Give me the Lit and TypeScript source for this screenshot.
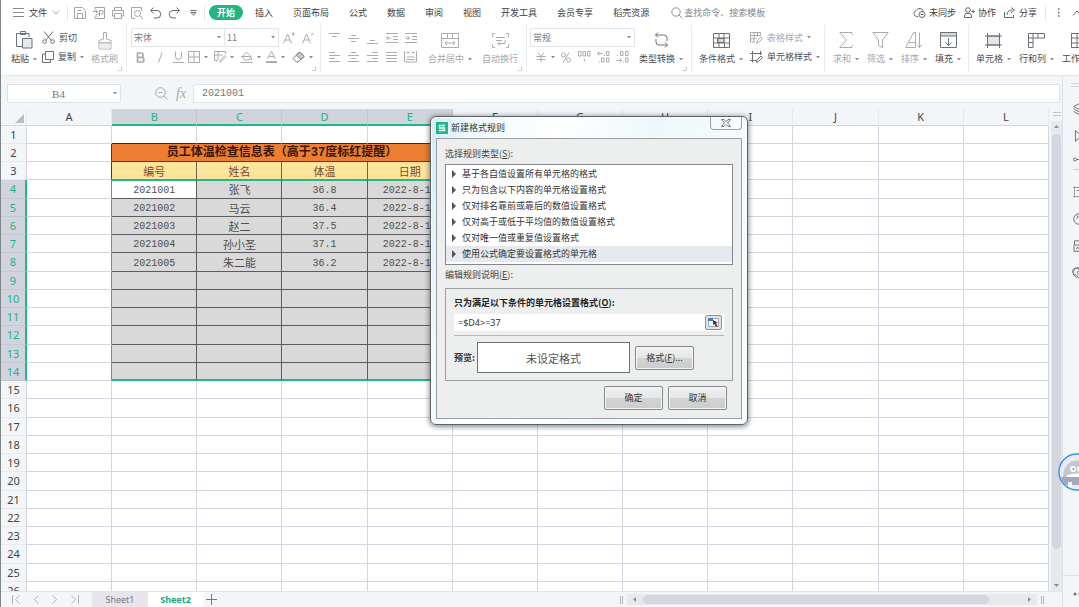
import { LitElement, html, svg, css, nothing, SVGTemplateResult } from "lit";
import { customElement, property, state } from "lit/decorators.js";
import { classMap } from "lit/directives/class-map.js";

/* Each glyph is drawn in its own box: [width, height, strokes]. */
const GLYPHS: Record<string, [number, number, SVGTemplateResult]> = {
  menu: [11, 9, svg`<path d="M0 .5h11M0 4.5h11M0 8.5h11"/>`],
  chevDown: [8, 5, svg`<path d="M1 .5l3 3.5 3-3.5"/>`],
  chevUp: [10, 6, svg`<path d="M1 5.5l4-4.500 4 4.500"/>`],
  save: [12, 12, svg`<path d="M.5 11.500V.5h8l3 3v8zM3.500 11V6.500h5V11M3.500 3.500h4"/>`],
  pdf: [12, 12, svg`<path d="M2 3.500V.5h9.500v11H2V9M0 4.500h4.500M3 3l1.500 1.500L3 6M6.500 9V3.500h2a1.500 1.500 0 010 3.500h-4c-2 0-2 2.500 0 2.500"/>`],
  print: [12, 12, svg`<path d="M2.500 3.500v-3h7v3M2.500 9H.5V3.500h11V9h-2M2.500 6.500h7v5h-7z"/>`],
  preview: [12, 12, svg`<path d="M4 11.500H.5V.5h10V4"/><circle cx="6.500" cy="6.500" r="3"/><path d="M9 9l3 3"/>`],
  undo: [11, 12, svg`<path d="M3.500.5L.7 3.500l2.800 3M1 3.500h6a3.500 3.500 0 010 7.500H4"/>`],
  redo: [11, 12, svg`<path d="M7.500.5l2.800 3-2.800 3M10 3.500H4A3.500 3.500 0 004 11h3"/>`],
  more: [7, 6, svg`<path d="M.5.5h6M1 2.500h5L3.500 5.300z"/>`],
  search: [12, 12, svg`<circle cx="5" cy="5" r="4.200"/><path d="M8 8l3.500 3.500"/>`],
  cloud: [13, 11, svg`<path d="M5 9.500H3.500a3 3 0 01-.5-5.800 4 4 0 017.500.8"/><circle cx="9" cy="7.500" r="3"/><path d="M7.500 7.500h3"/>`],
  person: [11, 11, svg`<circle cx="4" cy="3" r="2.300"/><path d="M.5 10.500V9a2.500 2.500 0 012.500-2.500h2A2.500 2.500 0 017.500 9v1.500zM7.500 4.500h3.500M9.200 2.700v3.600"/>`],
  share: [12, 11, svg`<path d="M.5 5v5.500h9V8M3 8c0-3.500 2-5 5.500-5M7 .5L10.500 3 7 6"/>`],
  dots: [2, 9, svg`<path d="M0 1h1.500M0 4.500h1.500M0 8h1.500" stroke-width="1.500"/>`],
  paste: [17, 18, svg`<path d="M6 15.500H.5v-13H13V6M4.500.5h5v3h-5z"/><path d="M6.500 7.500h9.500v9.500H6.500z" fill="#e8eaed"/>`],
  cut: [13, 13, svg`<path d="M2 .5l7.500 9M11 .5l-7.500 9"/><circle cx="2.500" cy="10.500" r="1.800"/><circle cx="10.500" cy="10.500" r="1.800"/>`],
  copy: [12, 12, svg`<path d="M3.500.5h8v8h-8zM3.500 3H.5v8.500h8V8.500"/>`],
  brush: [14, 19, svg`<path d="M5.500 8V1.500h3V8l4.500 1.500V12H1V9.500zM1 12h12v6H1z"/><path d="M1.500 12.500h11v5h-11z" fill="#eee" stroke="none"/>`],
  fontUp: [12, 12, svg`<path d="M.5 11.500L4.500 2l4 9.500M2 8h5M8.500 2h3.500M10.200.3v3.500"/>`],
  fontDown: [12, 12, svg`<path d="M.5 11.500L4.500 2l4 9.500M2 8h5M9 2h3"/>`],
  bold: [9, 11, svg`<path d="M1.500 1h3.500a2.100 2.100 0 010 4.300H1.500zM1.500 5.300h4a2.300 2.300 0 010 4.700h-4z" stroke-width="1.700"/>`],
  italic: [6, 11, svg`<path d="M5 .5L1.500 10.500"/>`],
  underline: [11, 12, svg`<path d="M2.500.5v5a3 3 0 006 0v-5M0 11.500h11"/>`],
  border: [12, 12, svg`<path d="M.5.5h11v11H.5zM6 .5v11M.5 6h11"/>`],
  cellEdit: [12, 12, svg`<path d="M4 9.500H.5V.5h11V3M.5 4h8M4 .5v9M6 11.500l1-3 4-4 1 1-4 4z"/>`],
  fill: [13, 12, svg`<path d="M2.500 5.500l4-4.500 4.500 4.500-2 3.500H4.500zM1 5.500h9.500M.5 11.500h12M11.500 6.500v2.500"/>`],
  fontColor: [11, 12, svg`<path d="M1.500 8L5.500.5 9.500 8M3 5.500h5"/><path d="M0 11h11" stroke-width="2"/>`],
  eraser: [13, 12, svg`<path d="M1 7.500L7.500 1 12 5.500 6 11H4.500z"/><path d="M4.500 4.200L7.500 1 12 5.500 9 8.500z" fill="#ccc"/>`],
  top: [11, 12, svg`<path d="M0 1.500h11M3 4.500h5"/>`],
  middle: [11, 12, svg`<path d="M3 3.500h5M0 6.500h11M3 9.500h5"/>`],
  bottom: [11, 12, svg`<path d="M3 8.500h5M0 11.500h11"/>`],
  outdent: [12, 12, svg`<path d="M0 1.500h12M7 4.500h5M7 7.500h5M0 10.500h12M.5 6H5M2.500 4L.5 6l2 2"/>`],
  indent: [12, 12, svg`<path d="M0 1.500h12M7 4.500h5M7 7.500h5M0 10.500h12M0 6h4.500M2.500 4l2 2-2 2"/>`],
  left: [11, 12, svg`<path d="M0 1.500h6M0 4.500h11M0 7.500h6M0 10.500h11"/>`],
  center: [11, 12, svg`<path d="M3 1.500h5M0 4.500h11M3 7.500h5M0 10.500h11"/>`],
  right: [11, 12, svg`<path d="M5 1.500h6M0 4.500h11M5 7.500h6M0 10.500h11"/>`],
  justify: [11, 12, svg`<path d="M0 1.500h11M0 4.500h11M0 7.500h11M0 10.500h11"/>`],
  spread: [13, 12, svg`<path d="M.5 0v11M12.500 0v11M2.500 1.500h3M7.500 1.500h3M4 .5v2M9 .5v2M2.500 6h8M2.500 8.500h8M.5 11h12"/>`],
  merge: [18, 15, svg`<path d="M.5.5h17v14H.5zM.5 5.500h17M6.500.5v5M11.500.5v5M4 10h10M6 8l-2 2 2 2M12 8l2 2-2 2"/>`],
  wrap: [17, 15, svg`<path d="M3 .5H.5V4M14 .5h2.500V4M3 14.500H.5V11M14 14.500h2.500V11M4 4.500h9M4 7.500h6M13 7v3.500H6M8 8.500l-2 2 2 2"/>`],
  yen: [10, 11, svg`<path d="M2 .5L5 4.500l3-4M.5 4.500h9M.5 7.500h9M5 4.500v6"/>`],
  percent: [10, 11, svg`<circle cx="2.500" cy="3" r="2"/><circle cx="7.500" cy="8" r="2"/><path d="M8 .5L2 10.500"/>`],
  thousand: [13, 12, svg`<path d="M.5.500h2.500v4.500H.5zM5 .5h2.500v4.500H5zM9.500.5H12v4.500H9.500zM6.500 8V10.500"/>`],
  decMore: [13, 12, svg`<path d="M.5 2.500h5M2.500.5l-2 2 2 2M7 4.500h1M9.500.5H12v4H9.500zM2 11h1M4.500 7H7v4H4.500zM9.500 7H12v4H9.500z"/>`],
  decLess: [13, 12, svg`<path d="M1 4.500h1M4.500.5H7v4H4.500zM9.500.5H12v4H9.500zM.5 9.500h5M3.500 7.500l2 2-2 2M7 11h1M9.500 7H12v4H9.500z"/>`],
  convert: [15, 16, svg`<path d="M4 .5L1.500 3 4 5.500M1.500 3H10a3 3 0 013 3v3M11 10.500l2.500 2.500-2.500 2.500M13.500 13H5a3 3 0 01-3-3V7"/>`],
  condition: [17, 15, svg`<path d="M.5.5h16v14H.5zM.5 5h16M.5 10h16M6 .5V5M11 .5V5M4.500 5v5M11 5v5M6 10v4.500M11.500 10v4.500"/><path d="M5 5.500h6v4H5z" fill="#d5d9de"/>`],
  tableStyle: [13, 12, svg`<path d="M5 10H.5V.5h10V4M.5 3.500h10M.5 6.700h6M4 .5V10M7.500.5V5M6.500 11.500l.5-2.500 4-4 1.500 1.500-4 4z"/>`],
  cellStyle: [13, 12, svg`<path d="M2.500 0v9.500H7M0 2.500h12M10.500 0v4M0 9.500h3M2.500 11.500V9M6.500 11.500l.5-2.500 4-4 1.500 1.500-4 4z"/>`],
  sum: [14, 16, svg`<path d="M13 3V.5H.8L7.500 8 .8 15.500H13V13"/>`],
  filter: [17, 16, svg`<path d="M.8.5h15.400L10.500 8v7.500l-4-2V8z"/>`],
  sort: [18, 16, svg`<path d="M.8 15.500L8.500.5h2v15zM4 10.500h6.500M14.500.5v15M12 12.500l2.500 3 2.500-3"/>`],
  fillDown: [17, 16, svg`<path d="M.5.5h16v15H.5z"/><path d="M.5.5h16v3.500H.5z" fill="#d5d9de"/><path d="M8.500 6v7.500M5.500 10.500l3 3 3-3"/>`],
  cell: [17, 15, svg`<path d="M2.500 3h12v9h-12z" fill="#e3e6ea"/><path d="M2.500 0v15M14.500 0v15M0 3h17M0 12h17"/>`],
  rowcol: [17, 15, svg`<path d="M.5.5h16v4.500H.5zM.5 5v9.500H5V.5M10 .5V5M.5 9.500H5"/>`],
  sheet: [17, 15, svg`<path d="M.5.5h16v14H.5zM.5 5h16M.5 10h16M6 .5v14M11 .5v14"/>`],
  zoomOut: [13, 13, svg`<circle cx="5.500" cy="5.500" r="4.800"/><path d="M3.500 5.500h4M9 9l3.500 3.500"/>`],
  corner: [4, 4, svg`<path d="M0 3.500h3.500V0"/>`],
  first: [8, 9, svg`<path d="M.5 0v9M7.500.5l-4 4 4 4"/>`],
  prev: [6, 9, svg`<path d="M5.500.5l-4 4 4 4"/>`],
  next: [6, 9, svg`<path d="M.5.500l4 4-4 4"/>`],
  last: [8, 9, svg`<path d="M7.500 0v9M.5.5l4 4-4 4"/>`],
  plus: [11, 11, svg`<path d="M5.500 0v11M0 5.500h11"/>`],
  close: [10, 8, svg`<path d="M.5.500h2.500l2 2 2-2h2.500L6.500 4l3 3.500H7l-2-2-2 2H.5l3-3.500z" fill="#fff"/>`],
  layers: [12, 12, svg`<path d="M.7 3.500L6 .7l5.300 2.800L6 6.300zM.7 6L6 8.800 11.300 6M.7 8.500L6 11.300l5.300-2.800"/>`],
  cursor: [12, 12, svg`<path d="M2.500.5v11l3-3.500h5z"/>`],
  slider: [12, 5, svg`<circle cx="2" cy="2.500" r="1.500"/><path d="M3.500 2.500H12"/>`],
  select: [12, 12, svg`<path d="M1.500.500v11M.500 1.500h11M.500 10.500h11M4 4.500h8" stroke-dasharray="2 1"/>`],
  clock: [12, 12, svg`<circle cx="6" cy="6" r="5.300"/><path d="M3.500 2c2 1.500 2 2.500 0 4"/>`],
  chart: [12, 12, svg`<path d="M1.500 5V.8H12M.5 5h11M1 6v5.300h11M3 9l1.500-2L6 9"/>`],
  pin: [12, 12, svg`<path d="M4 10.500A5 5 0 116.500.8M6 11.500L3.500 8a3.500 3.500 0 113-4.500"/><circle cx="5.500" cy="5.500" r="1.200"/>`],
};

const icon = (name: string) => {
  const [w, h, body] = GLYPHS[name];
  return html`<svg class="icon" width=${w} height=${h} viewBox="0 0 ${w} ${h}" aria-hidden="true">${body}</svg>`;
};
const caret = html`<svg class="caret" width="4" height="3" viewBox="0 0 4 3" aria-hidden="true"><path d="M0 0h4L2 2.500z"/></svg>`;

const base = css`
  * { box-sizing: border-box; }
  button, input, select {
    font: inherit; color: inherit; margin: 0; padding: 0;
    border: 0; background: none; border-radius: 0;
  }
  button { white-space: nowrap; cursor: default; }
  .icon { display: block; flex: none; fill: none; stroke: currentColor; stroke-width: 1; overflow: visible; }
  .caret { display: block; flex: none; fill: #8a8d92; }
`;

@customElement("menu-bar")
class MenuBar extends LitElement {
  static styles = [base, css`
    :host { display: flex; align-items: center; height: 25px; background: #fff; white-space: nowrap; overflow: hidden; }
    .file { display: flex; align-items: center; gap: 5px; padding-left: 12px; width: 66px; flex: none; }
    .file .chev { color: #a5a8ad; }
    .menu { color: #888; }
    .rule { width: 1px; height: 16px; background: #e3e5e8; flex: none; }
    .quick { display: flex; padding: 0 1px 0 2px; flex: none; color: #a0a3a8; }
    .quick button { width: 19px; height: 20px; display: grid; place-items: center; }
    .quick .dark { color: #666a70; }
    .tabs { display: flex; align-items: center; gap: 20px; flex: none; }
    .tabs .on { background: #24b47e; color: #fff; font-weight: 700; border-radius: 8px; width: 34px; height: 15px; margin: 0 -8px 0 4px; }
    .find { display: flex; align-items: center; gap: 1px; margin-left: 22px; color: #8b93a0; }
    .find input { width: 100px; outline: 0; }
    .find input::placeholder { color: #7f8894; opacity: 1; }
    .right { display: flex; align-items: center; gap: 8px; margin-left: auto; flex: none; }
    .right button { display: flex; align-items: center; gap: 3px; }
    .right .icon { color: #666a75; }
    .tail { display: flex; align-items: center; width: 34px; gap: 12px; overflow: hidden; }
  `];
  render() {
    return html`
      <button class="file"><span class="menu">${icon("menu")}</span>文件<span class="chev">${icon("chevDown")}</span></button>
      <span class="rule"></span>
      <div class="quick">
        ${["save", "pdf", "print", "preview"].map((n) => html`<button aria-label=${n}>${icon(n)}</button>`)}
        ${["undo", "redo", "more"].map((n) => html`<button class="dark" aria-label=${n}>${icon(n)}</button>`)}
      </div>
      <span class="rule"></span>
      <nav class="tabs">
        ${["开始", "插入", "页面布局", "公式", "数据", "审阅", "视图", "开发工具", "会员专享", "稻壳资源"].map(
          (t, i) => html`<button class=${classMap({ on: i === 0 })}>${t}</button>`)}
      </nav>
      <label class="find">${icon("search")}<input placeholder="查找命令、搜索模板" aria-label="查找命令、搜索模板"></label>
      <div class="right">
        <button>${icon("cloud")}未同步</button>
        <button>${icon("person")}协作</button>
        <button>${icon("share")}分享</button>
        <div class="tail"><span class="rule"></span>${icon("dots")}${icon("chevUp")}</div>
      </div>`;
  }
}

@customElement("tool-ribbon")
class ToolRibbon extends LitElement {
  static styles = [base, css`
    :host { display: flex; height: 51px; background: #fff; border-bottom: 1px solid #e4e7eb; overflow: hidden; color: #4a4e55; }
    .group { display: flex; position: relative; flex: none; padding-top: 3px; border-right: 1px solid #e9ebee; height: 47px; }
    .group:last-child { border: 0; }
    .icon { color: #6c7077; }
    .off { color: #a4a7ac; }
    .off .icon { color: #a9acb1; }
    .group .corner { position: absolute; right: 4px; bottom: 1px; }
    .group .corner .icon { color: #c6c9cd; }
    .big { display: grid; grid-template-rows: 24px 14px; justify-items: center; align-items: center; }
    .big .text { display: flex; align-items: center; gap: 4px; }
    .two { display: grid; grid-template-rows: 19px 20px; }
    .line { display: flex; align-items: center; }
    .item { display: flex; align-items: center; gap: 4px; }
    .sq { display: grid; place-items: center; width: 19px; height: 18px; }
    .drop { display: flex; align-items: center; gap: 4px; width: 26px; height: 18px; }
    .off .dark .icon { color: #74787e; }
    .field { display: flex; align-items: center; position: relative; height: 19px; border: 1px solid #e3e5e8; color: #777b81; }
    .field select { appearance: none; width: 100%; height: 17px; padding-left: 2px; outline: 0; }
    .field .caret { position: absolute; right: 3px; }
    .clip { width: 126px; padding-left: 10px; gap: 5px; }
    .clip .brush { width: 31px; }
    .font { width: 194px; padding-left: 4px; }
    .font .size { border-left: 0; width: 54px; }
    .font .family { width: 94px; }
    .align { width: 206px; padding-left: 4px; }
    .align .merge { width: 50px; margin-left: 5px; }
    .align .wrap { width: 42px; margin-left: 4px; }
    .num { width: 165px; padding-left: 3px; }
    .num .field { width: 105px; }
    .num .money { margin-left: 6px; width: 20px; gap: 5px; }
    .num .conv { width: 46px; margin-left: 3px; }
    .style { width: 133px; padding-left: 7px; gap: 7px; }
    .edit { width: 144px; padding-left: 4px; }
    .edit .big { width: 34px; }
    .cells { padding-left: 3px; }
    .cells .big { width: 43px; }
  `];
  private big(name: string, label: string, cls = "", drop = true) {
    return html`<button class="big ${cls}">${icon(name)}<span class="text">${label}${drop ? caret : nothing}</span></button>`;
  }
  private sq(name: string) {
    return html`<button class="sq" aria-label=${name}>${icon(name)}</button>`;
  }
  private drop(name: string, cls = "") {
    return html`<button class="drop ${cls}" aria-label=${name}>${icon(name)}${caret}</button>`;
  }
  private field(label: string, value: string, cls = "") {
    return html`<div class="field ${cls}"><select aria-label=${label}><option>${value}</option></select>${caret}</div>`;
  }
  render() {
    return html`
      <div class="group clip">
        ${this.big("paste", "粘贴")}
        <div class="two">
          <button class="item">${icon("cut")}剪切</button>
          <button class="item">${icon("copy")}复制${caret}</button>
        </div>
        ${this.big("brush", "格式刷", "brush off", false)}
        <span class="corner">${icon("corner")}</span>
      </div>
      <div class="group font">
        <div class="two">
          <div class="line off">
            ${this.field("字体", "宋体", "family")}${this.field("字号", "11", "size")}
            ${this.sq("fontUp")}${this.sq("fontDown")}
          </div>
          <div class="line off">
            ${this.sq("bold")}${this.sq("italic")}${this.sq("underline")}
            ${this.drop("border")}${this.drop("cellEdit")}${this.drop("fill")}${this.drop("fontColor")}${this.drop("eraser", "dark")}
          </div>
        </div>
        <span class="corner">${icon("corner")}</span>
      </div>
      <div class="group align off">
        <div class="two">
          <div class="line">${["top", "middle", "bottom", "outdent", "indent"].map((n) => this.sq(n))}</div>
          <div class="line">${["left", "center", "right", "justify", "spread"].map((n) => this.sq(n))}</div>
        </div>
        ${this.big("merge", "合并居中", "merge")}
        ${this.big("wrap", "自动换行", "wrap", false)}
        <span class="corner">${icon("corner")}</span>
      </div>
      <div class="group num">
        <div class="two">
          ${this.field("数字格式", "常规")}
          <div class="line off">
            ${this.drop("yen", "money")}${["percent", "thousand", "decMore", "decLess"].map((n) => this.sq(n))}
          </div>
        </div>
        ${this.big("convert", "类型转换", "conv")}
        <span class="corner">${icon("corner")}</span>
      </div>
      <div class="group style">
        ${this.big("condition", "条件格式")}
        <div class="two">
          <button class="item off">${icon("tableStyle")}表格样式${caret}</button>
          <button class="item">${icon("cellStyle")}单元格样式${caret}</button>
        </div>
      </div>
      <div class="group edit">
        ${this.big("sum", "求和", "off")}${this.big("filter", "筛选", "off")}${this.big("sort", "排序", "off")}${this.big("fillDown", "填充")}
      </div>
      <div class="group cells">
        ${this.big("cell", "单元格")}${this.big("rowcol", "行和列")}${this.big("sheet", "工作表")}
      </div>`;
  }
}

@customElement("formula-bar")
class FormulaBar extends LitElement {
  static styles = [base, css`
    :host { display: flex; align-items: flex-start; height: 33px; padding: 8px 2px 0 6px; color: #777; }
    .box { display: flex; align-items: center; height: 19px; background: #fff; border: 1px solid #dde1e6; border-radius: 2px; font-family: "Liberation Serif", serif; font-size: 11px; }
    .name { width: 114px; padding-right: 3px; flex: none; }
    .name input { flex: 1; min-width: 0; text-align: center; padding-right: 4px; outline: 0; }
    .tools { display: flex; align-items: center; gap: 8px; width: 72px; height: 19px; padding-left: 34px; flex: none; color: #a5a8ac; }
    .fx { font: italic 14px "Liberation Serif", serif; }
    .formula { flex: 1; min-width: 0; }
    .formula input { width: 100%; padding-left: 8px; font: 10px "Liberation Mono", monospace; outline: 0; }
  `];
  render() {
    return html`
      <div class="box name"><input aria-label="名称框" value="B4">${caret}</div>
      <div class="tools">${icon("zoomOut")}<span class="fx">fx</span></div>
      <div class="box formula"><input aria-label="编辑栏" value="2021001"></div>`;
  }
}

const COLS = "ABCDEFGHIJKL".split("");
const PEOPLE = [
  ["2021001", "张飞", "36.8", "2022-8-10"],
  ["2021002", "马云", "36.4", "2022-8-10"],
  ["2021003", "赵二", "37.5", "2022-8-10"],
  ["2021004", "孙小圣", "37.1", "2022-8-10"],
  ["2021005", "朱二能", "36.2", "2022-8-10"],
];
const HEADINGS = ["编号", "姓名", "体温", "日期"];

@customElement("sheet-grid")
class SheetGrid extends LitElement {
  static styles = [base, css`
    :host { display: block; overflow: hidden; background: #fff; }
    table { width: 100%; table-layout: fixed; border-collapse: separate; border-spacing: 0; }
    th, td { padding: 0; height: 18px; overflow: hidden; white-space: nowrap; text-align: center; vertical-align: middle; line-height: 16px; border: 0 solid #d3d6e1; border-width: 0 1px 1px 0; }
    tbody tr:nth-child(4n) > * { height: 19px; }
    th { background: #f3f6f8; font-weight: 400; font-size: 11px; color: #444; font-family: "Noto Sans", sans-serif; }
    thead th { height: 17px; line-height: 14px; border-color: #e2e5ea #e6e9ee #d3d6e1; }
    thead th.on { background: #d1d4dc; color: #1fb288; border-bottom: 2px solid #1fb886; border-right-color: #c5c8d1; }
    .num { width: 26px; border-bottom-color: #e6e9ee; border-right-color: #d3d6e1; }
    .num.on { background: #d1d4dc; color: #1fb288; border-right: 2px solid #1fb886; border-bottom-color: #c5c8d1; }
    .all { width: 26px; }
    .all svg { display: block; margin: 2px 2px 0 auto; }
    td { font: 10px/14px "Liberation Mono", "Noto Sans CJK SC", monospace; color: #505050; }
    .edge { border-right-color: #1fb886; }
    .frame { border-right-color: #6b2a10; }
    .above { border-bottom-color: #5a2208; }
    td.title { background: #ed7d31; color: #3a1500; font: 700 12px/16px "Liberation Mono", "Noto Sans CJK SC", monospace; border-color: #7c3008; }
    td.head { background: #ffe49b; color: #7a4a2c; font: 11px/16px "Noto Sans CJK SC", sans-serif; border-right-color: #6f6350; border-bottom-color: #1fb886; }
    td.data { background: #d9d9d9; border-color: #5c5c60; padding-top: 3px; }
    td.data.cjk { font: 11px/16px "Noto Sans CJK SC", sans-serif; padding-top: 0; }
    td.active { background: #fff; }
    td.upper { box-shadow: inset 0 1px #1fb886; }
    td.lower { border-bottom: 2px solid #1fb886; }
  `];
  private cell(row: number, c: number) {
    const inCols = c >= 1 && c <= 4;
    if (row === 2 && inCols) return c === 1 ? html`<td class="title" colspan="4">员工体温检查信息表（高于37度标红提醒）</td>` : nothing;
    if (row === 3 && inCols) return html`<td class="head">${HEADINGS[c - 1]}</td>`;
    if (row >= 4 && row <= 14 && inCols) {
      return html`<td class=${classMap({
        data: true, cjk: c === 2, active: row === 4 && c === 1, upper: row === 4, lower: row === 14,
      })}>${PEOPLE[row - 4]?.[c - 1] ?? ""}</td>`;
    }
    return html`<td class=${classMap({
      edge: c === 0 && row >= 4 && row <= 14,
      frame: c === 0 && (row === 2 || row === 3),
      above: row === 1 && inCols,
    })}></td>`;
  }
  render() {
    return html`<table>
      <thead><tr>
        <th class="all"><svg width="9" height="9" viewBox="0 0 9 9"><path d="M9 0v9H0z" fill="#b9bcc4"/></svg></th>
        ${COLS.map((c, i) => html`<th class=${classMap({ on: i >= 1 && i <= 4 })}>${c}</th>`)}
      </tr></thead>
      <tbody>
        ${Array.from({ length: 26 }, (_, i) => i + 1).map((r) => html`<tr>
          <th class=${classMap({ num: true, on: r >= 4 && r <= 14 })}>${r}</th>
          ${COLS.map((_, c) => this.cell(r, c))}
        </tr>`)}
      </tbody>
    </table>`;
  }
}

@customElement("sheet-tabs")
class SheetTabs extends LitElement {
  static styles = [base, css`
    :host { display: flex; height: 16px; border-top: 1px solid #e0e3e8; font-family: "Noto Sans", sans-serif; font-size: 9px; color: #777; }
    .nav { display: flex; align-items: center; gap: 13px; width: 91px; padding-left: 11px; color: #b0b4ba; flex: none; }
    .tab { width: 56px; background: #e4e6eb; flex: none; }
    .tab.on { background: #fff; color: #14a877; font-weight: 700; width: 55px; }
    .add { width: 17px; display: grid; place-items: center; color: #777; flex: none; }
    .scroll { display: flex; align-items: center; gap: 4px; margin-left: auto; width: 442px; padding-right: 18px; }
    .grip { width: 3px; height: 8px; border: 1px solid #b2b5ba; border-width: 0 1px; flex: none; }
    .track { display: flex; align-items: center; flex: 1; height: 11px; background: #e6eaee; padding: 0 6px; }
    .arrow { fill: #8a8d92; flex: none; }
    .thumb { height: 9px; width: 350px; max-width: 87%; margin: 0 auto 0 7px; border-radius: 5px; background: #d4d7df; }
  `];
  render() {
    return html`
      <div class="nav">${["first", "prev", "next", "last"].map((n) => html`<button aria-label=${n}>${icon(n)}</button>`)}</div>
      <button class="tab">Sheet1</button><button class="tab on">Sheet2</button>
      <button class="add" aria-label="新建工作表">${icon("plus")}</button>
      <div class="scroll">
        <span class="grip"></span>
        <div class="track">
          <svg class="arrow" width="3" height="5" viewBox="0 0 3 5"><path d="M3 0v5L0 2.500z"/></svg>
          <span class="thumb"></span>
          <svg class="arrow" width="3" height="5" viewBox="0 0 3 5"><path d="M0 0v5l3-2.500z"/></svg>
        </div>
        <span class="grip"></span>
      </div>`;
  }
}

@customElement("rule-dialog")
class RuleDialog extends LitElement {
  @property({ type: Array }) rules = [
    "基于各自值设置所有单元格的格式",
    "只为包含以下内容的单元格设置格式",
    "仅对排名靠前或靠后的数值设置格式",
    "仅对高于或低于平均值的数值设置格式",
    "仅对唯一值或重复值设置格式",
    "使用公式确定要设置格式的单元格",
  ];
  @state() private picked = 5;
  static styles = [base, css`
    :host { display: block; width: 318px; padding: 0 5px 5px; border: 1px solid #5d6368; border-radius: 6px; background: linear-gradient(100deg, #d3ebf4, #f1fafd 12%, #fff 35%, #eef8fb 60%, #fbfdfe); box-shadow: 0 1px 5px 1px rgba(30, 35, 40, .5), inset 0 0 0 1px #f6fcff; color: #333; }
    .title { display: flex; align-items: center; height: 21px; gap: 3px; color: #333; }
    .logo { display: block; }
    .close { display: grid; place-items: center; width: 32px; height: 13px; margin: 0 0 auto auto; border: 1px solid #9a9fa5; border-top: 0; border-radius: 0 0 4px 4px; color: #777; }
    .client { border: 1px solid #9a9ea3; background: #edefef; padding: 9px 8px 8px; }
    .caption { display: block; line-height: 12px; color: #444; }
    .rules { list-style: none; margin: 4px 0; padding: 1px 0 2px; background: #fff; border: 1px solid #84888d; }
    .rule { display: flex; align-items: center; gap: 6px; width: 100%; height: 16px; padding: 0 6px; text-align: left; }
    .rule.on { background: #e6e9ee; }
    .tri { fill: #555; flex: none; }
    .panel { border: 1px solid #9a9ea3; margin-top: 7px; padding: 7px 8px; }
    .strong { display: block; font-weight: 700; line-height: 14px; color: #222; }
    .entry { display: flex; align-items: center; height: 17px; margin-top: 4px; background: #fff; }
    .entry input { flex: 1; min-width: 0; padding-left: 4px; outline: 0; font-family: "Noto Sans", sans-serif; }
    .pick { display: grid; place-items: center; width: 17px; height: 15px; margin-right: 2px; border: 1px solid #8b9097; border-radius: 2px; background: #dfe4ea; }
    .split { height: 1px; background: #b4b7ba; margin: 4px 0 6px; }
    .row { display: flex; align-items: center; gap: 5px; }
    .row b { width: 18px; white-space: nowrap; }
    .sample { display: grid; place-items: center; width: 153px; height: 31px; background: #fff; border: 1px solid #6d7176; font-size: 11px; color: #555; }
    .push { width: 59px; height: 24px; border: 1px solid #85898e; border-radius: 2px; background: linear-gradient(#f1f1f1, #e6e6e6 50%, #d3d4d5 50%, #cbcccd); box-shadow: inset 0 0 0 1px #f5f5f5; }
    .foot { display: flex; justify-content: flex-end; gap: 5px; padding: 5px 6px 0 0; }
  `];
  render() {
    return html`
      <div class="title">
        <svg class="logo" width="12" height="12" viewBox="0 0 12 12"><path fill="#1fb886" d="M0 0h12v12H0z"/><path d="M9 3.500H3.500V6h5v2.500H3" fill="none" stroke="#fff" stroke-width="1.300"/></svg>
        新建格式规则
        <button class="close" aria-label="关闭">${icon("close")}</button>
      </div>
      <div class="client">
        <span class="caption" id="kinds">选择规则类型(<u>S</u>):</span>
        <ul class="rules" role="listbox" aria-labelledby="kinds">
          ${this.rules.map((r, i) => html`<li role="presentation">
            <button role="option" aria-selected=${i === this.picked} class=${classMap({ rule: true, on: i === this.picked })} @click=${() => (this.picked = i)}>
              <svg class="tri" width="4" height="8" viewBox="0 0 4 8"><path d="M0 0l4 4-4 4z"/></svg>${r}
            </button></li>`)}
        </ul>
        <span class="caption">编辑规则说明(<u>E</u>):</span>
        <div class="panel">
          <label class="strong" for="expr">只为满足以下条件的单元格设置格式(<u>O</u>):</label>
          <div class="entry">
            <input id="expr" value="=$D4>=37">
            <button class="pick" aria-label="选择区域"><svg width="11" height="9" viewBox="0 0 11 9"><path fill="#fff" stroke="#9aa8ba" d="M.5.500h10v8H.5z"/><path fill="#4b7ab5" d="M0 0h5v3H0z"/><path fill="#5b3020" d="M5 2l5 2.500-2 .5 1.500 3-1.500 1-1.500-3L5 7z"/></svg></button>
          </div>
          <div class="split"></div>
          <div class="row"><b>预览:</b><div class="sample">未设定格式</div><button class="push">格式(<u>F</u>)...</button></div>
        </div>
        <div class="foot"><button class="push">确定</button><button class="push">取消</button></div>
      </div>`;
  }
}

@customElement("side-rail")
class SideRail extends LitElement {
  static styles = [base, css`
    :host { display: flex; flex-direction: column; border-left: 1px solid #dde0e5; overflow: hidden; padding-left: 10px; color: #71757b; }
    .grab { flex: none; height: 4px; margin: 7px 0 8px -2px; border: 1px solid #cfd3d8; border-width: 1px 0; width: 20px; }
    .tool { display: flex; align-items: center; height: 27px; flex: none; }
    .tool.short { height: 20px; }
    .rule { height: 1px; background: #cfd3d8; flex: none; width: 20px; margin-bottom: 8px; }
    .foot { margin-top: auto; margin-left: -10px; padding: 11px 0 0 10px; height: 32px; border-top: 1px solid #dde0e5; flex: none; }
  `];
  render() {
    return html`
      <span class="grab"></span>
      <button class="tool" aria-label="样式">${icon("layers")}</button>
      <button class="tool" aria-label="选择">${icon("cursor")}</button>
      <button class="tool short" aria-label="属性">${icon("slider")}</button>
      <span class="rule"></span>
      ${["select", "clock", "chart", "pin"].map((n) => html`<button class="tool" aria-label=${n}>${icon(n)}</button>`)}
      <div class="foot"><svg width="12" height="4" viewBox="0 0 12 4" fill="#71757b"><circle cx="2" cy="2" r="1.500"/><circle cx="7" cy="2" r="1.500"/></svg></div>`;
  }
}

@customElement("app-root")
class AppRoot extends LitElement {
  static styles = [base, css`
    :host { display: flex; flex-direction: column; position: relative; height: 100vh; overflow: hidden; border-left: 1px solid #7d8886; box-sizing: border-box; background: #f3f6f8; color: #3c4046; font-family: "Noto Sans CJK SC", sans-serif; font-size: 9px; line-height: 12px; }
    .body { flex: 1; min-height: 0; display: flex; }
    .work { flex: 1; min-width: 0; display: flex; flex-direction: column; }
    .rail { width: 17px; flex: none; }
    .area { flex: 1; min-height: 0; display: flex; }
    .grid { flex: 1; min-width: 0; }
    .vscroll { display: flex; flex-direction: column; align-items: center; width: 13px; padding-left: 2px; flex: none; }
    .split { width: 8px; height: 4px; margin: 3px 0 5px; border: 1px solid #c0c4ca; border-width: 1px 0; flex: none; }
    .track { flex: 1; display: flex; flex-direction: column; align-items: center; width: 11px; background: #e6eaee; padding: 4px 0; }
    .thumb { width: 9px; height: 415px; max-height: 92%; margin: 6px 0 auto; border-radius: 5px; background: #d4d7df; }
    .arrow { fill: #8a8d92; flex: none; }
    .dialog { position: absolute; left: 429px; top: 116px; }
    .helper { position: absolute; right: -17px; top: 453px; }
  `];
  render() {
    return html`
      <menu-bar></menu-bar>
      <tool-ribbon></tool-ribbon>
      <div class="body">
        <div class="work">
          <formula-bar></formula-bar>
          <div class="area">
            <sheet-grid class="grid"></sheet-grid>
            <div class="vscroll">
              <span class="split"></span>
              <div class="track">
                <svg class="arrow" width="5" height="3" viewBox="0 0 5 3"><path d="M0 3h5L2.500 0z"/></svg>
                <span class="thumb"></span>
                <svg class="arrow" width="5" height="3" viewBox="0 0 5 3"><path d="M0 0h5L2.500 3z"/></svg>
              </div>
            </div>
          </div>
          <sheet-tabs></sheet-tabs>
        </div>
        <side-rail class="rail"></side-rail>
      </div>
      <rule-dialog class="dialog" role="dialog" aria-label="新建格式规则"></rule-dialog>
      <svg class="helper" width="38" height="38" viewBox="0 0 38 38" aria-hidden="true">
        <circle cx="19" cy="19" r="18" fill="#e9ebef" stroke="#3a97ea" stroke-width="1.500"/>
        <path d="M5 24C5 2 33 2 33 24z" fill="#c3c6d0"/>
        <path d="M3 24h32v4l-3 4H7l-3-4z" fill="#a3a9bb"/>
        <path d="M9 22q10-3 20 0v2H9zM10 29h4v5h-4z" fill="#fff"/>
        <circle cx="15" cy="16" r="3" fill="#fff"/><circle cx="22" cy="16" r="3" fill="#fff"/>
        <circle cx="15.500" cy="16" r="1" fill="#888"/><circle cx="22" cy="16" r="1" fill="#888"/>
      </svg>`;
  }
}
